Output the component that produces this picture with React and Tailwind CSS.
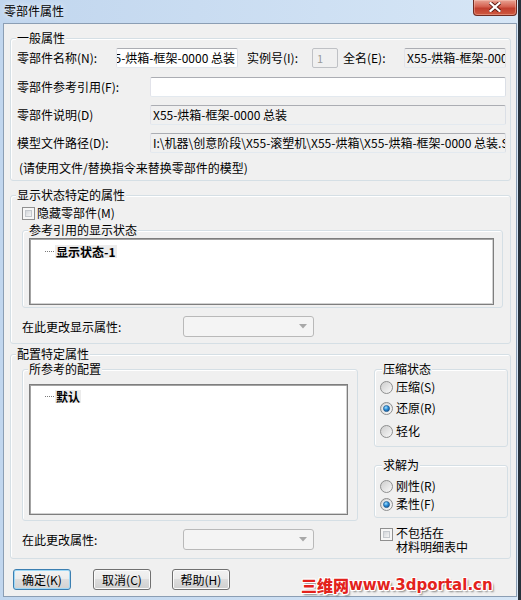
import React from 'react';

function Check() {
  return (
    <div className="w-[13px] h-[13px] shrink-0 border border-[#8f8f8f] bg-[#f6f6f6] p-[2px]">
      <div className="w-full h-full border border-[#c4c8cd] bg-linear-to-br from-[#d3d6da] to-[#f4f4f4]" />
    </div>
  );
}

function Radio({ checked }) {
  return (
    <svg width="13" height="13" viewBox="0 0 13 13" className="shrink-0">
      <defs>
        <linearGradient id="rgOuter" x1="0" y1="0" x2="1" y2="1">
          <stop offset="0" stopColor="#cbcbcb" />
          <stop offset="1" stopColor="#fbfbfb" />
        </linearGradient>
        <radialGradient id="rgDot" cx="0.4" cy="0.35" r="0.75">
          <stop offset="0" stopColor="#a6e3ff" />
          <stop offset="0.45" stopColor="#2d8ed8" />
          <stop offset="1" stopColor="#0a4a8a" />
        </radialGradient>
      </defs>
      <circle cx="6.5" cy="6.5" r="6" fill="url(#rgOuter)" stroke="#8e8f8f" strokeWidth="1" />
      {checked && <circle cx="6.5" cy="6.5" r="4.3" fill="#f4f4f4" />}
      {checked && <circle cx="6.5" cy="6.5" r="3.1" fill="url(#rgDot)" stroke="#1d4f7e" strokeWidth="0.6" />}
    </svg>
  );
}

function Group({ title, className, legendClass, children }) {
  return (
    <fieldset
      className={
        'm-0 p-0 min-w-0 border border-[#d5dfe5] rounded-[3px] shadow-[inset_1px_1px_0_#ffffff] ' + className
      }
    >
      <legend className={'px-[1px] leading-[14px] bg-[#f0f0f0] ' + legendClass}>{title}</legend>
      {children}
    </fieldset>
  );
}

const boxBorder =
  'h-[20px] rounded-[2px] border border-t-[#abadb3] border-l-[#e2e3ea] border-r-[#dbdfe6] border-b-[#e3e9ef] flex items-center overflow-hidden whitespace-nowrap ';

function Dropdown() {
  return (
    <div className="w-[131px] h-[21px] rounded-[3px] border border-[#b9b9b9] bg-[#f4f4f4] flex items-center justify-end pr-[6px]">
      <svg width="8" height="5" viewBox="0 0 8 5">
        <path d="M0 0 L8 0 L4 4.5 Z" fill="#a8a8a8" />
      </svg>
    </div>
  );
}

function TreeItem({ label }) {
  return (
    <div className="flex items-center h-[13px]">
      <span className="ml-[13px] w-[9px] h-0 border-t border-dotted border-[#7a7a7a]" />
      <span className="ml-[1px] px-[1px] bg-[#ececec] font-bold leading-[13px]">{label}</span>
    </div>
  );
}

const listBox =
  'border border-[#7e7e7e] bg-white shadow-[inset_1px_1px_0_#a3a3a3,inset_-1px_-1px_0_#d2d2d2] p-[2px] ';

function Button({ label, primary }) {
  return (
    <div
      className={
        primary
          ? 'w-[58px] h-[21px] rounded-[3px] border border-[#3c7fb1] bg-[linear-gradient(#f3f3f3,#ececec_50%,#dedede_50%,#d2d2d2)] shadow-[inset_0_0_0_1px_#9fd8f6] flex items-center justify-center'
          : 'w-[58px] h-[21px] rounded-[3px] border border-[#707070] bg-[linear-gradient(#f2f2f2,#ebebeb_50%,#dddddd_50%,#cfcfcf)] shadow-[inset_0_0_0_1px_#fbfbfb] flex items-center justify-center'
      }
    >
      {label}
    </div>
  );
}

export default function App() {
  return (
    <div className="relative w-[521px] h-[600px] flex bg-[#27313c] font-['Noto_Sans_CJK_SC',sans-serif] text-[12px] leading-[14px] text-black overflow-hidden">
      <div className="w-[518px] h-[600px] flex flex-col bg-linear-to-r from-[#c1d6ee] to-[#d6e6f6]">
        {/* title bar */}
        <div className="h-[23px] flex items-start justify-between">
          <span className="ml-[4px] mt-[4px] [text-shadow:0_0_6px_#ffffff]">零部件属性</span>
          <div className="mr-[1px] w-[44px] h-[16px] rounded-b-[4px] border border-t-0 border-[#6f2b22] bg-[linear-gradient(#e9a394,#d4604f_45%,#c13f2f_55%,#cf5a40)] shadow-[inset_0_0_0_1px_rgba(255,220,210,0.35)] flex items-start justify-center pt-[2px]">
            <svg width="12" height="10" viewBox="0 0 12 10">
              <path d="M1.5 1 L10.5 9 M10.5 1 L1.5 9" stroke="#5a1810" strokeWidth="4" strokeLinecap="square" />
              <path d="M1.5 1 L10.5 9 M10.5 1 L1.5 9" stroke="#ffffff" strokeWidth="2.2" strokeLinecap="square" />
            </svg>
          </div>
        </div>

        {/* client area */}
        <div className="ml-[3px] w-[514px] h-[574px] border border-[#8b9eb4] bg-[#f0f0f0] flex flex-col">
          {/* 一般属性 */}
          <Group title="一般属性" className="ml-[6px] mt-[7px] w-[501px] h-[150px]" legendClass="ml-[5px]">
            <div className="pl-[6px] pr-[4px] flex flex-col">
              <div className="mt-[3px] h-[20px] flex items-center">
                <span className="w-[99px]">零部件名称(N):</span>
                <div className={boxBorder + 'w-[122px] bg-white justify-end pr-[2px]'}>X55-烘箱-框架-0000 总装</div>
                <span className="ml-[9px] w-[65px]">实例号(I):</span>
                <div className="w-[26px] h-[20px] rounded-[2px] border border-[#bfc1c5] bg-[#f0f0f0] flex items-center pl-[4px] text-[#9a9a9a] text-[11px]">
                  1
                </div>
                <span className="ml-[5px] w-[61px]">全名(E):</span>
                <div className={boxBorder + 'flex-1 bg-[#f0f0f0] pl-[2px]'}>X55-烘箱-框架-0000 总装</div>
              </div>
              <div className="mt-[9px] h-[20px] flex items-center">
                <span className="w-[133px]">零部件参考引用(F):</span>
                <div className={boxBorder + 'flex-1 bg-white'} />
              </div>
              <div className="mt-[8px] h-[20px] flex items-center">
                <span className="w-[133px]">零部件说明(D)</span>
                <div className={boxBorder + 'flex-1 bg-[#f0f0f0] pl-[2px]'}>X55-烘箱-框架-0000 总装</div>
              </div>
              <div className="mt-[8px] h-[20px] flex items-center">
                <span className="w-[133px]">模型文件路径(D):</span>
                <div className={boxBorder + 'flex-1 bg-[#f0f0f0] pl-[2px]'}>
                  I:\机器\创意阶段\X55-滚塑机\X55-烘箱\X55-烘箱-框架-0000 总装.SLDASM
                </div>
              </div>
              <div className="mt-[8px] h-[14px] pl-[2px]">(请使用文件/替换指令来替换零部件的模型)</div>
            </div>
          </Group>

          {/* 显示状态特定的属性 */}
          <Group title="显示状态特定的属性" className="ml-[6px] mt-[7px] w-[501px] h-[156px]" legendClass="ml-[5px]">
            <div className="pl-[11px] flex flex-col">
              <div className="mt-[3px] h-[16px] flex items-center gap-[2px]">
                <Check />
                <span>隐藏零部件(M)</span>
              </div>
              <Group title="参考引用的显示状态" className="mt-[2px] w-[481px] h-[85px]" legendClass="ml-[5px]">
                <div className={listBox + 'ml-[6px] mt-[1px] w-[465px] h-[67px] flex flex-col'}>
                  <div className="mt-[4px]">
                    <TreeItem label="显示状态-1" />
                  </div>
                </div>
              </Group>
              <div className="mt-[8px] h-[21px] flex items-center">
                <span className="w-[161px]">在此更改显示属性:</span>
                <Dropdown />
              </div>
            </div>
          </Group>

          {/* 配置特定属性 */}
          <Group title="配置特定属性" className="ml-[6px] mt-[3px] w-[501px] h-[212px]" legendClass="ml-[5px]">
            <div className="pl-[11px] flex items-start">
              <div className="w-[336px] flex flex-col">
                <Group title="所参考的配置" className="mt-[1px] w-[336px] h-[159px]" legendClass="ml-[5px]">
                  <div className={listBox + 'ml-[6px] mt-[8px] w-[319px] h-[131px] flex flex-col'}>
                    <div className="mt-[3px]">
                      <TreeItem label="默认" />
                    </div>
                  </div>
                </Group>
                <div className="mt-[8px] h-[21px] flex items-center">
                  <span className="w-[161px]">在此更改属性:</span>
                  <Dropdown />
                </div>
              </div>

              <div className="ml-[16px] w-[134px] flex flex-col">
                <Group title="压缩状态" className="mt-[1px] w-[134px] h-[85px]" legendClass="ml-[7px]">
                  <div className="pl-[5px] flex flex-col">
                    <div className="mt-[3px] h-[16px] flex items-center gap-[3px]">
                      <Radio />
                      <span>压缩(S)</span>
                    </div>
                    <div className="mt-[5px] h-[16px] flex items-center gap-[3px]">
                      <Radio checked />
                      <span>还原(R)</span>
                    </div>
                    <div className="mt-[7px] h-[16px] flex items-center gap-[3px]">
                      <Radio />
                      <span>轻化</span>
                    </div>
                  </div>
                </Group>
                <Group title="求解为" className="mt-[11px] w-[134px] h-[60px]" legendClass="ml-[7px]">
                  <div className="pl-[5px] flex flex-col">
                    <div className="mt-[6px] h-[16px] flex items-center gap-[3px]">
                      <Radio />
                      <span>刚性(R)</span>
                    </div>
                    <div className="mt-[2px] h-[16px] flex items-center gap-[3px]">
                      <Radio checked />
                      <span>柔性(F)</span>
                    </div>
                  </div>
                </Group>
                <div className="mt-[8px] pl-[6px] flex items-start gap-[3px]">
                  <div className="mt-[2px]">
                    <Check />
                  </div>
                  <div className="flex flex-col">
                    <span>不包括在</span>
                    <span>材料明细表中</span>
                  </div>
                </div>
              </div>
            </div>
          </Group>

          {/* buttons */}
          <div className="mt-[10px] ml-[9px] flex items-center">
            <Button label="确定(K)" primary />
            <div className="ml-[22px]">
              <Button label="取消(C)" />
            </div>
            <div className="ml-[21px]">
              <Button label="帮助(H)" />
            </div>
          </div>
        </div>
      </div>

      {/* watermark */}
      <div className="absolute left-[301px] top-[577px] flex items-end font-bold text-[#e3221c] font-['DejaVu_Sans','Noto_Sans_CJK_SC',sans-serif] [text-shadow:1px_0_0_#fff,-1px_0_0_#fff,0_1px_0_#fff,0_-1px_0_#fff,1px_1px_0_#fff,-1px_-1px_0_#fff,1px_-1px_0_#fff,-1px_1px_0_#fff,2px_2px_2px_rgba(0,0,0,0.45)]">
        <span className="text-[16px] leading-[17px] font-['Noto_Sans_CJK_SC',sans-serif] font-black">三维网</span>
        <span className="text-[15px] leading-[17px]">www.3dportal.cn</span>
      </div>
    </div>
  );
}
